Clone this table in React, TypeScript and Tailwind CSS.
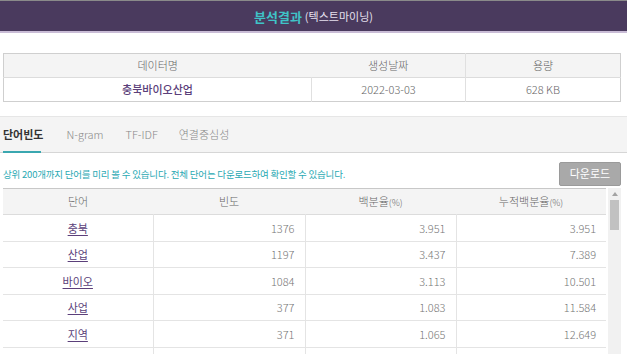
import React from "react";

const font = { fontFamily: '"Noto Sans CJK KR", "Noto Sans", sans-serif' };

const rows = [
  { word: "충북", freq: 1376, pct: "3.951", cum: "3.951" },
  { word: "산업", freq: 1197, pct: "3.437", cum: "7.389" },
  { word: "바이오", freq: 1084, pct: "3.113", cum: "10.501" },
  { word: "사업", freq: 377, pct: "1.083", cum: "11.584" },
  { word: "지역", freq: 371, pct: "1.065", cum: "12.649" },
];

const App: React.FC = () => {
  return (
    <div
      className="w-[627px] h-[354px] overflow-hidden bg-white text-[#555] font-light"
      style={font}
    >
      {/* 상단 제목 */}
      <div className="h-[33px] bg-[#4a3a5e] border-t border-[#8a8a8a] border-b-2 border-b-[#c9bcd6] flex items-center justify-center gap-[3px]">
        <span className="text-[13px] font-bold text-[#3fc3c7] leading-none">분석결과</span>
        <span className="text-[11px] font-normal text-[#e6e0ee] leading-none">(텍스트마이닝)</span>
      </div>

      {/* 데이터 정보 */}
      <div className="pt-[20px] px-[3px] pr-[6px]">
        <table className="w-full border-collapse border border-[#cfcfcf] text-[11px] table-fixed">
          <thead>
            <tr className="h-[24px] bg-[#f4f4f4] text-[#666]">
              <th className="w-[308px] font-light">데이터명</th>
              <th className="w-[154px] font-light">생성날짜</th>
              <th className="font-light border-l border-[#e0e0e0]">용량</th>
            </tr>
          </thead>
          <tbody>
            <tr className="h-[24px] border-t border-[#dcdcdc] text-center">
              <td className="text-[#5b3f7a] font-medium">충북바이오산업</td>
              <td className="border-l border-[#e0e0e0] text-[#666]">2022-03-03</td>
              <td className="border-l border-[#e0e0e0] text-[#666]">628 KB</td>
            </tr>
          </tbody>
        </table>
      </div>

      {/* 탭 */}
      <div className="mt-[14px] h-[37px] bg-[#f4f4f4] border-t border-[#e6e6e6] border-b border-b-[#d6d6d6] flex items-stretch pl-[3px] text-[11px]">
        <div className="relative flex items-center pr-[23px]">
          <span className="font-bold text-[#333]">단어빈도</span>
          <div className="absolute left-0 bottom-[-1px] w-[38px] h-[2px] bg-[#3aa7b0]" />
        </div>
        <div className="flex items-center pr-[22px] text-[#888]">N-gram</div>
        <div className="flex items-center pr-[21px] text-[#888]">TF-IDF</div>
        <div className="flex items-center text-[#888]">연결중심성</div>
      </div>

      {/* 안내 + 다운로드 */}
      <div className="h-[35px] flex items-center justify-between pl-[3px] pr-[6px]">
        <span className="text-[9.5px] tracking-[-0.2px] text-[#29a9b3] mt-[8px] font-normal">
          상위 200개까지 단어를 미리 볼 수 있습니다. 전체 단어는 다운로드하여 확인할 수 있습니다.
        </span>
        <button className="w-[62px] h-[24px] mt-[6px] rounded-[2px] bg-[#a9a9a9] border border-[#9a9a9a] text-white text-[11px] font-normal">
          다운로드
        </button>
      </div>

      {/* 단어빈도 표 */}
      <div className="flex pl-[3px] pr-[6px]">
        <table className="w-[605px] border-collapse border-t border-[#c8c8c8] text-[11px] table-fixed">
          <thead>
            <tr className="h-[26px] bg-[#f4f4f4] text-[#666] border-b border-[#dcdcdc]">
              <th className="w-[150px] font-light">단어</th>
              <th className="w-[152px] font-light">빈도</th>
              <th className="w-[151px] font-light">
                백분율<span className="text-[9px]">(%)</span>
              </th>
              <th className="font-light">
                누적백분율<span className="text-[9px]">(%)</span>
              </th>
            </tr>
          </thead>
          <tbody>
            {rows.map((r) => (
              <tr key={r.word} className="h-[26.5px] border-b border-[#e4e4e4] text-[#777]">
                <td className="text-center">
                  <span className="text-[#5b3f7a] font-normal underline underline-offset-2">{r.word}</span>
                </td>
                <td className="text-right pr-[10px] border-l border-[#e4e4e4]">{r.freq}</td>
                <td className="text-right pr-[10px] border-l border-[#e4e4e4]">{r.pct}</td>
                <td className="text-right pr-[10px] border-l border-[#e4e4e4]">{r.cum}</td>
              </tr>
            ))}
            <tr className="h-[26.5px]">
              <td />
              <td className="border-l border-[#e4e4e4]" />
              <td className="border-l border-[#e4e4e4]" />
              <td className="border-l border-[#e4e4e4]" />
            </tr>
          </tbody>
        </table>
        {/* 스크롤바 */}
        <div className="w-[13px] ml-[2px] bg-[#f1f1f1] flex flex-col items-center h-[170px]">
          <div className="h-[12px] flex items-center justify-center">
            <svg width="6" height="4" viewBox="0 0 6 4">
              <path d="M3 0 L6 4 L0 4 Z" fill="#a3a3a3" />
            </svg>
          </div>
          <div className="w-[9px] h-[30px] bg-[#c1c1c1]" />
        </div>
      </div>
    </div>
  );
};

export default App;
